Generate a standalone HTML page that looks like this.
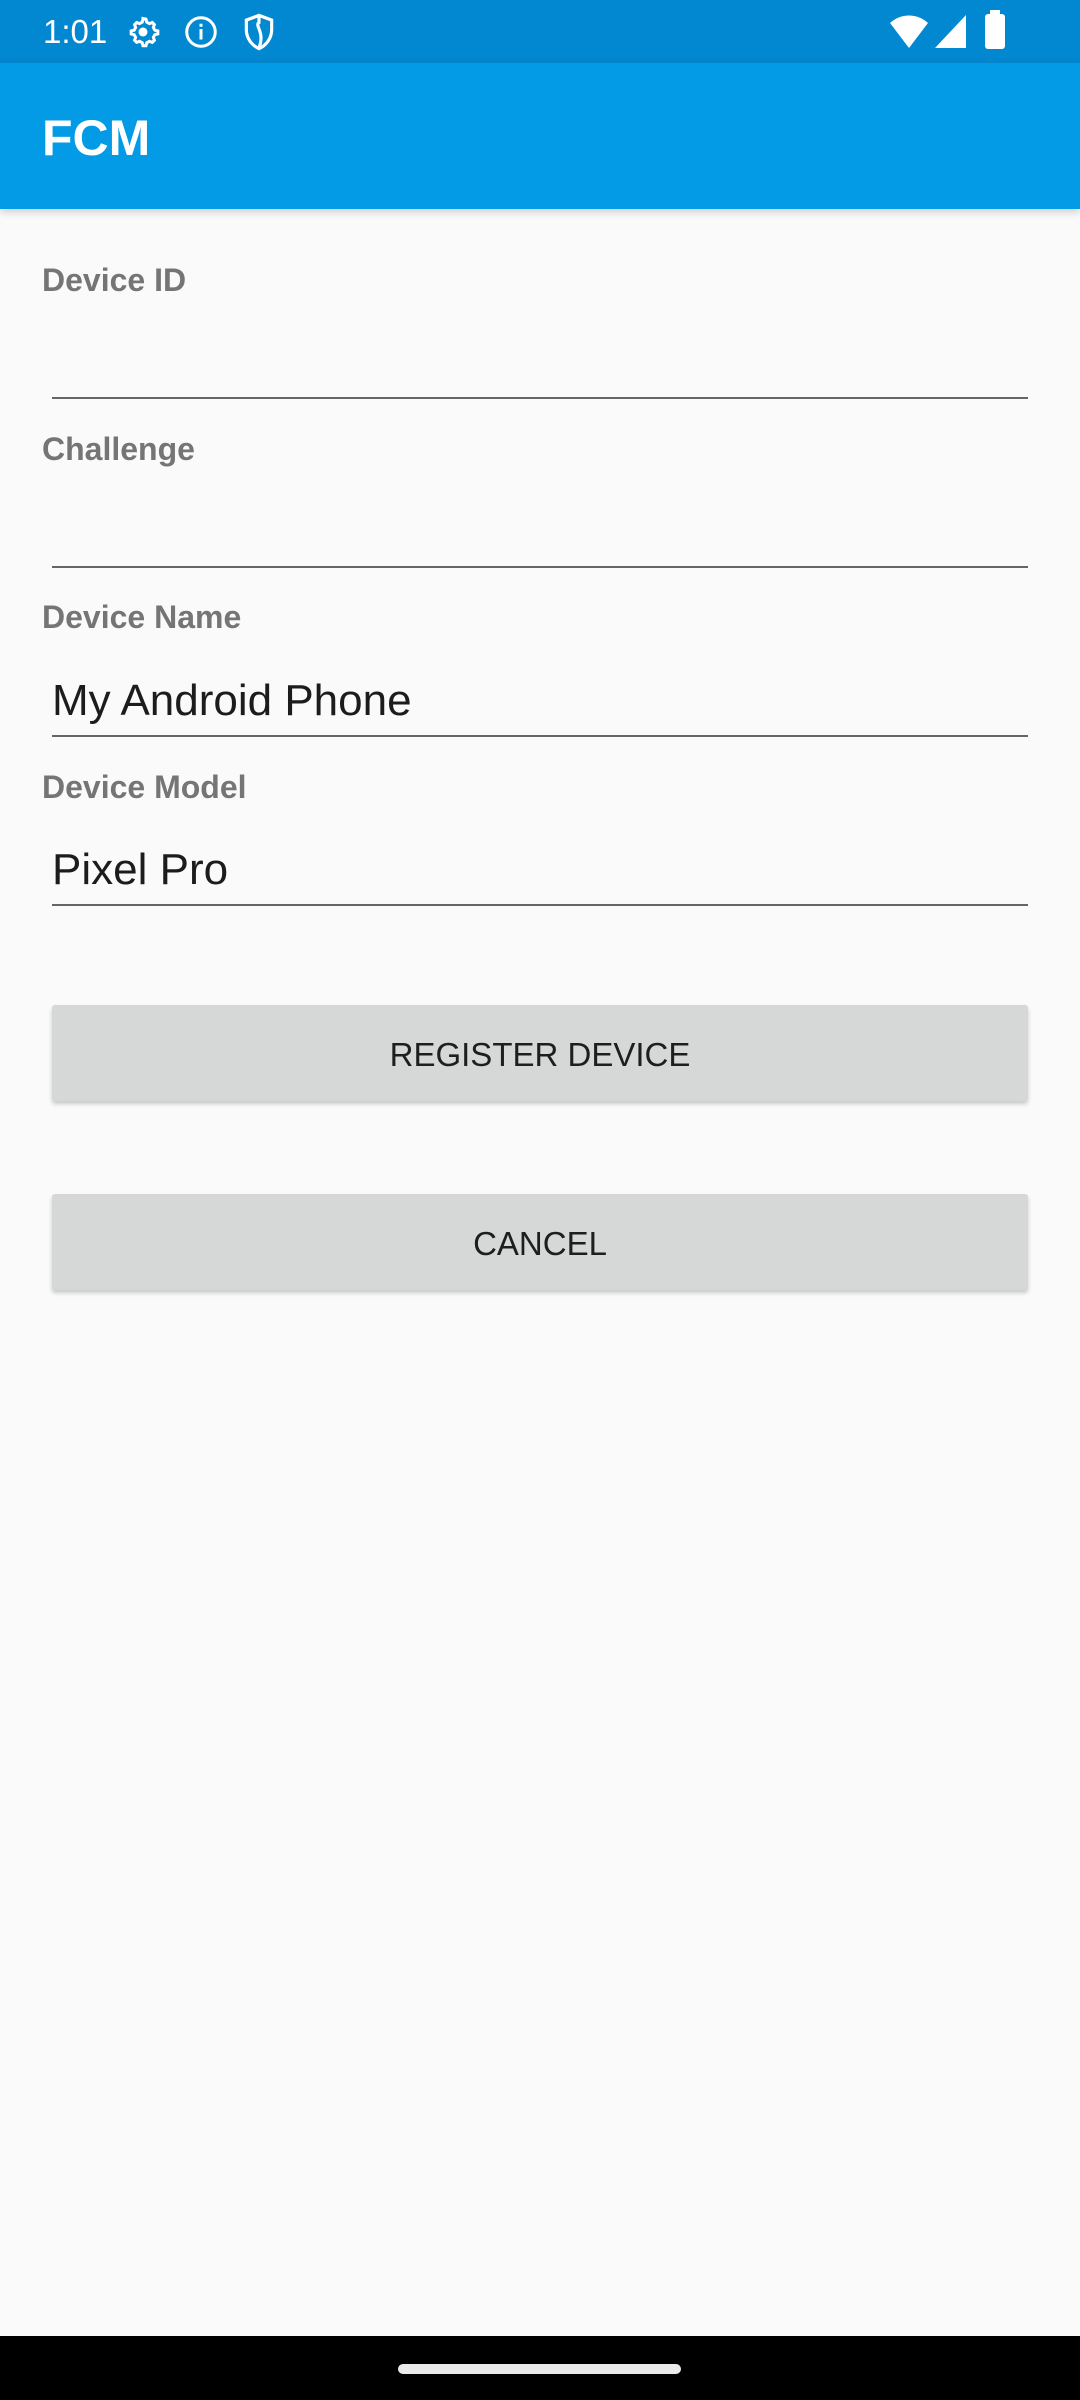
<!DOCTYPE html>
<html><head><meta charset="utf-8">
<style>
*{margin:0;padding:0;box-sizing:border-box}
body{width:1080px;height:2400px;background:#fafafa;font-family:"Liberation Sans",sans-serif;position:relative;overflow:hidden}
.abs{position:absolute}
.status{left:0;top:0;width:1080px;height:63px;background:#0288d1}
.appbar{left:0;top:63px;width:1080px;height:146px;background:#039be5;box-shadow:0 3px 8px rgba(0,0,0,.18)}
.title{left:42px;top:108px;color:#fff;font-size:50px;font-weight:bold;line-height:60px}
.label{left:42px;color:#757575;font-size:32px;font-weight:bold;line-height:40px}
.line{left:52px;width:976px;height:2px;background:#666}
.val{left:52px;color:#1c1c1c;font-size:44px;line-height:56px}
.btn{left:52px;width:976px;height:96px;background:#d6d7d7;border-radius:3px;box-shadow:0 3px 4px rgba(0,0,0,.2);color:#1e1e1e;font-size:33px;text-align:center;line-height:100px}
.nav{left:0;top:2336px;width:1080px;height:64px;background:#000}
.handle{left:398px;top:2364px;width:283px;height:10px;border-radius:5px;background:#ebebeb}
</style></head><body>
<div class="abs status"></div>
<div class="abs" style="left:43px;top:11px;color:#fff;font-size:33px;line-height:42px">1:01</div>
<svg class="abs" style="left:125px;top:14px" width="36" height="36" viewBox="0 0 24 24"><path fill="none" stroke="#fff" stroke-width="2" d="M12 3l2 .4.5 2 1.8 1 1.9-.7 1.4 1.4-.7 1.9 1 1.8 2 .5v2l-2 .5-1 1.8.7 1.9-1.4 1.4-1.9-.7-1.8 1-.5 2h-2l-.5-2-1.8-1-1.9.7-1.4-1.4.7-1.9-1-1.8-2-.5v-2l2-.5 1-1.8-.7-1.9 1.4-1.4 1.9.7 1.8-1 .5-2z"/><circle cx="12" cy="12" r="3" fill="#fff"/></svg>
<svg class="abs" style="left:183px;top:14px" width="36" height="36" viewBox="0 0 24 24"><circle cx="12" cy="12" r="9.5" fill="none" stroke="#fff" stroke-width="2"/><rect x="11" y="10" width="2" height="7" fill="#fff"/><rect x="11" y="6.5" width="2" height="2" fill="#fff"/></svg>
<svg class="abs" style="left:243px;top:13px" width="32" height="38" viewBox="0 0 20 24"><path fill="none" stroke="#fff" stroke-width="2" d="M10 1.5L2 4.5v6c0 5.5 3.5 10 8 12 4.5-2 8-6.5 8-12v-6z"/><path fill="none" stroke="#fff" stroke-width="2" d="M10 2v4c-3 2 4 6 0 16"/></svg>
<svg class="abs" style="left:889px;top:15px" width="40" height="34" viewBox="0 0 40 34"><path fill="#fff" d="M20 33L1 8C12-2 28-2 39 8z"/></svg>
<svg class="abs" style="left:935px;top:15px" width="31" height="33" viewBox="0 0 31 33"><path fill="#fff" d="M31 0V33H0z"/></svg>
<div class="abs" style="left:985px;top:14px;width:20px;height:35px;background:#fff;border-radius:3px"></div>
<div class="abs" style="left:990px;top:10px;width:10px;height:5px;background:#fff"></div>
<div class="abs appbar"></div>
<div class="abs title">FCM</div>

<div class="abs label" style="top:260px">Device ID</div>
<div class="abs line" style="top:397px"></div>
<div class="abs label" style="top:429px">Challenge</div>
<div class="abs line" style="top:566px"></div>
<div class="abs label" style="top:597px">Device Name</div>
<div class="abs val" style="top:673px">My Android Phone</div>
<div class="abs line" style="top:735px"></div>
<div class="abs label" style="top:767px">Device Model</div>
<div class="abs val" style="top:842px">Pixel Pro</div>
<div class="abs line" style="top:904px"></div>

<div class="abs btn" style="top:1005px">REGISTER DEVICE</div>
<div class="abs btn" style="top:1194px">CANCEL</div>

<div class="abs nav"></div>
<div class="abs handle"></div>
</body></html>
